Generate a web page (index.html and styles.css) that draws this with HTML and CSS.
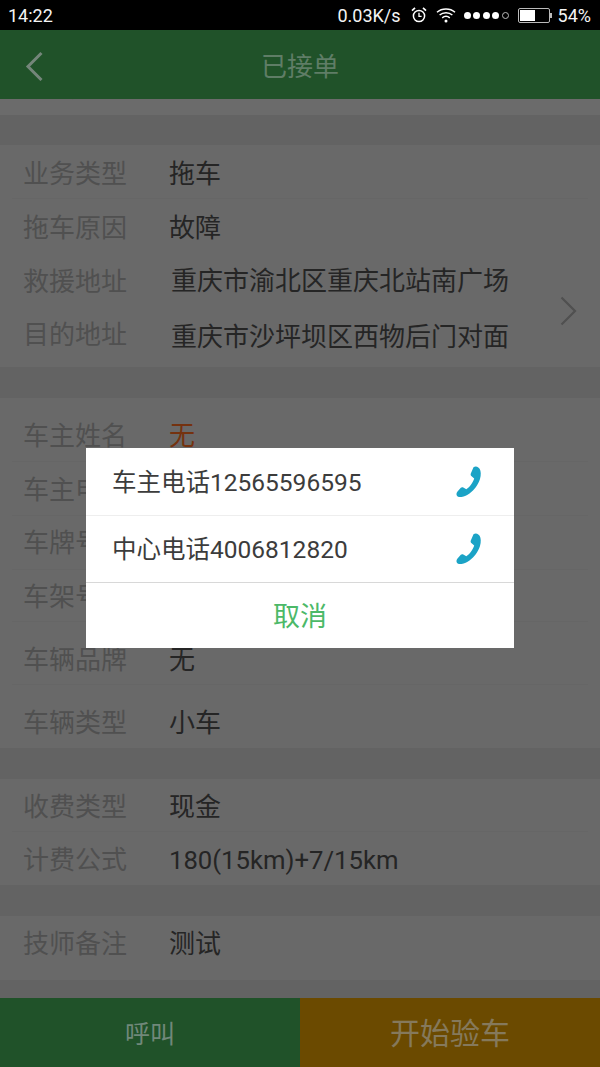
FILE: index.html
```html
<!DOCTYPE html>
<html lang="zh-CN">
<head>
<meta charset="utf-8">
<title>已接单</title>
<link rel="stylesheet" href="styles.css">
</head>
<body>
<div class="screen">
  <div class="statusbar">
    <span class="time">14:22</span>
    <div class="status-right">
      <span class="speed">0.03K/s</span>
      <svg class="ic-alarm" viewBox="0 0 16 18" width="16" height="18"><circle cx="8" cy="10" r="5.6" fill="none" stroke="#fff" stroke-width="1.5"/><path d="M8 6.800V10.400H10.600" fill="none" stroke="#fff" stroke-width="1.300"/><path d="M1 4.600 4 1.800M15 4.600 12 1.800" stroke="#fff" stroke-width="1.700"/></svg>
      <svg class="ic-wifi" viewBox="0 0 20 16" width="20" height="16"><path d="M1 5.200C6 .8 14 .8 19 5.200M3.600 8C7.200 4.900 12.800 4.900 16.400 8M6.200 10.800C8.400 9 11.600 9 13.800 10.800" fill="none" stroke="#fff" stroke-width="1.500"/><circle cx="10" cy="14" r="1.500" fill="#fff"/></svg>
      <div class="signal"><i></i><i></i><i></i><i></i><i class="off"></i></div>
      <div class="battery"><div class="batt-body"><div class="batt-fill"></div></div><div class="batt-tip"></div></div>
      <span class="pct">54%</span>
    </div>
  </div>

  <header class="appbar">
    <svg class="back" viewBox="0 0 20 30" width="20" height="30"><path d="M17.500 2 4 15.500 17.500 29" fill="none" stroke="#74867a" stroke-width="3"/></svg>
    <span class="title">已接单</span>
  </header>

  <main class="content">
    <section class="band clipped"><span class="label cut">救援地址</span></section>

    <section class="band s2">
      <div class="row h54 pt4"><span class="label">业务类型</span><span class="value">拖车</span></div>
      <div class="row h54 pt4 last"><span class="label">拖车原因</span><span class="value">故障</span></div>
      <div class="addr">
        <div class="addr-lines">
          <div class="addr-line"><span class="label">救援地址</span><span class="value wide up">重庆市渝北区重庆北站南广场</span></div>
          <div class="addr-line"><span class="label">目的地址</span><span class="value wide down">重庆市沙坪坝区西物后门对面</span></div>
        </div>
        <svg class="chev" viewBox="0 0 18 30" width="18" height="30"><path d="M2.500 1.500 16 15 2.500 28.500" fill="none" stroke="#505050" stroke-width="2.200"/></svg>
      </div>
    </section>

    <section class="band s3">
      <div class="row r64"><span class="label">车主姓名</span><span class="value red">无</span></div>
      <div class="row h54 pt2"><span class="label">车主电话</span></div>
      <div class="row h54"><span class="label">车牌号码</span></div>
      <div class="row r52"><span class="label">车架号码</span></div>
      <div class="row r63"><span class="label">车辆品牌</span><span class="value">无</span></div>
      <div class="row r63b last"><span class="label">车辆类型</span><span class="value">小车</span></div>
    </section>

    <section class="band s4">
      <div class="row h53 pt4"><span class="label">收费类型</span><span class="value">现金</span></div>
      <div class="row h53 pt2 last"><span class="label">计费公式</span><span class="value num">180(15km)+7/15km</span></div>
    </section>

    <section class="band s5">
      <div class="row r64c last"><span class="label">技师备注</span><span class="value">测试</span></div>
    </section>
  </main>

  <footer class="actions">
    <div class="act call">呼叫</div>
    <div class="act start">开始验车</div>
  </footer>

  <div class="scrim">
    <div class="dialog">
      <div class="opt tall">
        <span>车主电话12565596595</span>
        <svg class="phone" viewBox="0 0 26 32" width="26" height="32"><path d="M17.500 1.200 C19 .3 21 .4 22.300 1.500 L23.600 2.800 C25 5 25.200 9 24 13 C22.300 18.500 18.500 24 13.500 27.500 C11 29.200 8.500 30.500 5.500 31 C3.200 31.300 1.500 30.800 .8 29.500 C.2 28.300 .5 26.800 1.500 25.500 L4.800 21.800 C5.500 21 6.500 21 7.300 21.500 L10.300 23.300 C13.800 21 17 16.500 18.200 12.500 L15.300 10 C14.600 9.300 14.500 8.400 14.800 7.500 Z" fill="#1ba3c6"/></svg>
      </div>
      <div class="opt">
        <span>中心电话4006812820</span>
        <svg class="phone" viewBox="0 0 26 32" width="26" height="32"><path d="M17.500 1.200 C19 .3 21 .4 22.300 1.500 L23.600 2.800 C25 5 25.200 9 24 13 C22.300 18.500 18.500 24 13.500 27.500 C11 29.200 8.500 30.500 5.500 31 C3.200 31.300 1.500 30.800 .8 29.500 C.2 28.300 .5 26.800 1.500 25.500 L4.800 21.800 C5.500 21 6.500 21 7.300 21.500 L10.300 23.300 C13.800 21 17 16.500 18.200 12.500 L15.300 10 C14.600 9.300 14.500 8.400 14.800 7.500 Z" fill="#1ba3c6"/></svg>
      </div>
      <div class="cancel">取消</div>
    </div>
  </div>
</div>
</body>
</html>
```
FILE: styles.css
```css
* { box-sizing: border-box; }
html, body { margin: 0; padding: 0; background: #636363; }
body { font-family: Roboto, "Noto Sans CJK SC", sans-serif; }
.screen { position: relative; width: 600px; height: 1067px; overflow: hidden; display: flex; flex-direction: column; background: #636363; }

.statusbar { height: 30px; flex: none; background: #000; color: #f4f4f4; display: flex; align-items: center; justify-content: space-between; padding: 0 9px 0 8px; font-size: 18px; }
.status-right { display: flex; align-items: center; }
.speed { margin-right: 10px; }
.ic-alarm { margin-right: 9px; }
.ic-wifi { margin-right: 8px; }
.signal { display: flex; align-items: center; gap: 2.500px; margin-right: 9px; }
.signal i { width: 7px; height: 7px; border-radius: 50%; background: #fff; display: block; }
.signal i.off { background: none; border: 1px solid #bbb; }
.battery { display: flex; align-items: center; margin-right: 6px; }
.batt-body { width: 32px; height: 15px; border: 1px solid #bbb; border-radius: 2px; background: #000; padding: 1px; }
.batt-fill { width: 54%; height: 100%; background: #fff; }
.batt-tip { width: 2px; height: 5px; background: #bbb; }

.appbar { position: relative; height: 69px; flex: none; background: #205229; display: flex; align-items: center; justify-content: center; }
.back { position: absolute; left: 24px; top: 21px; }
.title { font-size: 26px; color: #5f7d66; margin-bottom: 1px; }

.content { flex: 1; min-height: 0; display: flex; flex-direction: column; }
.band { background: #696969; flex: none; }
.clipped { height: 16px; overflow: hidden; margin-bottom: 30px; background: #6b6b6b; padding-left: 23px; }
.cut { display: block; margin-top: -29px; }
.s3 { margin-top: 31px; }
.s4 { margin-top: 31px; }
.s5 { margin-top: 31px; margin-bottom: 18px; }

.row { display: flex; align-items: center; margin: 0 12px; padding: 0 11px; border-bottom: 1px solid #666; }
.row.last { border-bottom: none; }
.h54 { height: 54px; }
.h53 { height: 53px; }
.pt4 { padding-top: 4px; }
.pt2 { padding-top: 2px; }
.r64 { height: 64px; padding-top: 12px; }
.r52 { height: 52px; padding-top: 2px; }
.r63 { height: 63px; padding-top: 14px; }
.r63b { height: 63px; padding-top: 12px; }
.r64c { height: 64px; padding-bottom: 8px; }

.label { font-size: 26px; color: #505050; width: 146px; flex: none; line-height: 36px; }
.value { font-size: 26px; color: #252525; line-height: 36px; white-space: nowrap; }
.value.red { color: #75320f; }
.value.wide { margin-left: 2px; }
.value.up { margin-bottom: 2px; }
.value.down { margin-top: 4px; }
.value.num { font-size: 25.700px; }

.addr { position: relative; height: 114px; padding: 2px 23px 0; }
.addr-line { display: flex; align-items: center; height: 53px; }
.chev { position: absolute; right: 23px; top: 43px; }

.actions { height: 69px; flex: none; display: flex; }
.act { flex: 1; display: flex; align-items: center; justify-content: center; }
.call { background: #205229; color: #71887a; font-size: 25px; padding-bottom: 1px; }
.start { background: #6b4a00; color: #85795c; font-size: 30px; padding-bottom: 3px; }

.scrim { position: absolute; inset: 29px 0 0 0; display: flex; align-items: center; justify-content: center; }
.dialog { width: 428px; height: 200px; background: #fff; display: flex; flex-direction: column; }
.opt { height: 67px; flex: none; display: flex; align-items: center; justify-content: space-between; padding: 0 32px 3px 26px; font-size: 24.500px; color: #3c3c3c; border-bottom: 1px solid #eee; }
.opt.tall { height: 68px; }
.opt:nth-child(2) { border-bottom-color: #d8d8d8; }
.phone { margin-top: 3px; }
.cancel { flex: 1; display: flex; align-items: center; justify-content: center; color: #4cb968; font-size: 27px; padding-bottom: 2px; }
```
